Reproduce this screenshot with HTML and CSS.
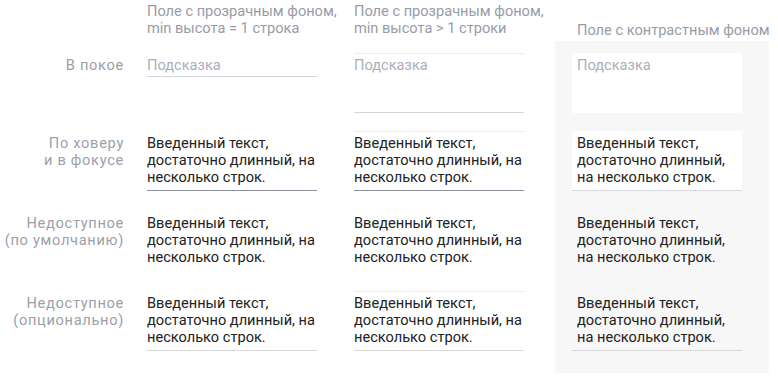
FILE: index.html
```html
<!DOCTYPE html>
<html>
<head>
    <title>Текстовое поле: состояния</title>
    <link rel="stylesheet" href="styles.css">
</head>
<body>
    <div class="states">
        <!-- Grey backdrop of the contrast column -->
        <div class="contrast-bg"></div>

        <!-- Header row -->
        <div class="col-head c1">Поле с прозрачным фоном,<br>min высота = 1 строка</div>
        <div class="col-head c2">Поле с прозрачным фоном,<br>min высота &gt; 1 строки</div>
        <div class="col-head c3 contrast-head">Поле с контрастным фоном</div>

        <!-- Idle -->
        <div class="label r1">В покое</div>
        <div class="cell c1 r1"><div class="field one-line idle"><span class="hint">Подсказка</span></div></div>
        <div class="cell c2 r1"><div class="field multi idle"><span class="hint">Подсказка</span></div></div>
        <div class="cell c3 r1"><div class="field multi boxed idle"><span class="hint">Подсказка</span></div></div>

        <!-- Hover & focus -->
        <div class="label r2">По ховеру<br>и в фокусе</div>
        <div class="cell c1 r2"><div class="field one-line focus">Введенный текст, достаточно длинный, на несколько строк.</div></div>
        <div class="cell c2 r2"><div class="field multi focus">Введенный текст, достаточно длинный, на несколько строк.</div></div>
        <div class="cell c3 r2"><div class="field multi boxed focus">Введенный текст, достаточно длинный, на несколько строк.</div></div>

        <!-- Disabled (default) -->
        <div class="label r3">Недоступное<br>(по умолчанию)</div>
        <div class="cell c1 r3"><div class="field one-line disabled">Введенный текст, достаточно длинный, на несколько строк.</div></div>
        <div class="cell c2 r3"><div class="field multi disabled">Введенный текст, достаточно длинный, на несколько строк.</div></div>
        <div class="cell c3 r3"><div class="field multi boxed disabled">Введенный текст, достаточно длинный, на несколько строк.</div></div>

        <!-- Disabled (optional) -->
        <div class="label r4">Недоступное<br>(опционально)</div>
        <div class="cell c1 r4"><div class="field one-line disabled-opt">Введенный текст, достаточно длинный, на несколько строк.</div></div>
        <div class="cell c2 r4"><div class="field multi disabled-opt">Введенный текст, достаточно длинный, на несколько строк.</div></div>
        <div class="cell c3 r4"><div class="field multi boxed disabled-opt">Введенный текст, достаточно длинный, на несколько строк.</div></div>
    </div>
</body>
</html>
```

FILE: styles.css
```css
body {
    margin: 0;
    font-family: Roboto, "Noto Sans", Arial, sans-serif;
    font-size: 14.6px;
    line-height: 17px;
    color: #222;
    background-color: #fff;
}

.states {
    display: grid;
    grid-template-columns: 147px 207px 201px 214px;
    grid-template-rows: 41px 90px 80px 80px 82px;
}

/* grid placement */
.c1 { grid-column: 2; }
.c2 { grid-column: 3; }
.c3 { grid-column: 4; }
.col-head { grid-row: 1; }
.r1 { grid-row: 2; }
.r2 { grid-row: 3; }
.r3 { grid-row: 4; }
.r4 { grid-row: 5; }

/* --- Header row --- */
.col-head {
    align-self: end;
    padding-bottom: 4px;
    color: #979ca7;
    white-space: nowrap;
}

.contrast-head {
    padding-left: 22px;
    padding-bottom: 2px;
}

/* --- Grey column behind the contrast fields --- */
.contrast-bg {
    grid-column: 4;
    grid-row: 2 / 6;
    background-color: #f7f7f7;
}

/* --- Row labels --- */
.label {
    grid-column: 1;
    text-align: right;
    padding-right: 23px;
    padding-top: 4px;
    color: #9ba0ab;
    letter-spacing: 0.7px;
}

.label.r1 {
    padding-top: 16px;
}

.cell {
    width: 170px;
}

.cell.c3 {
    padding-left: 17px;
}

.cell.r1 {
    padding-top: 12px;
}

/* --- Fields --- */
.field {
    box-sizing: border-box;
    padding: 3px 0 4px;
    border-top: 1px solid transparent;
    border-bottom: 1px solid transparent;
}

.field.multi {
    min-height: 60px;
}

.field.boxed {
    padding-left: 5px;
    padding-right: 5px;
}

.hint {
    color: #aab0bb;
}

/* idle */
.one-line.idle {
    padding-bottom: 2px;
    border-bottom-color: #d3d6dc;
}
.multi.idle {
    border-top-color: #ececec;
    border-bottom-color: #d3d6dc;
}
.boxed.idle {
    background-color: #fff;
    border-color: #fff;
}

/* hover & focus */
.one-line.focus {
    border-bottom-color: #8b919d;
}
.multi.focus {
    border-top-color: #ececec;
    border-bottom-color: #8b919d;
}
.boxed.focus {
    background-color: #fff;
    border-top-color: #fff;
    border-bottom-color: #d6d9df;
}

/* disabled, optional look */
.one-line.disabled-opt {
    border-bottom-color: #d9d9d9;
}
.multi.disabled-opt {
    border-top-color: #ececec;
    border-bottom-color: #d9d9d9;
}
.boxed.disabled-opt {
    border-top-color: transparent;
}
```
